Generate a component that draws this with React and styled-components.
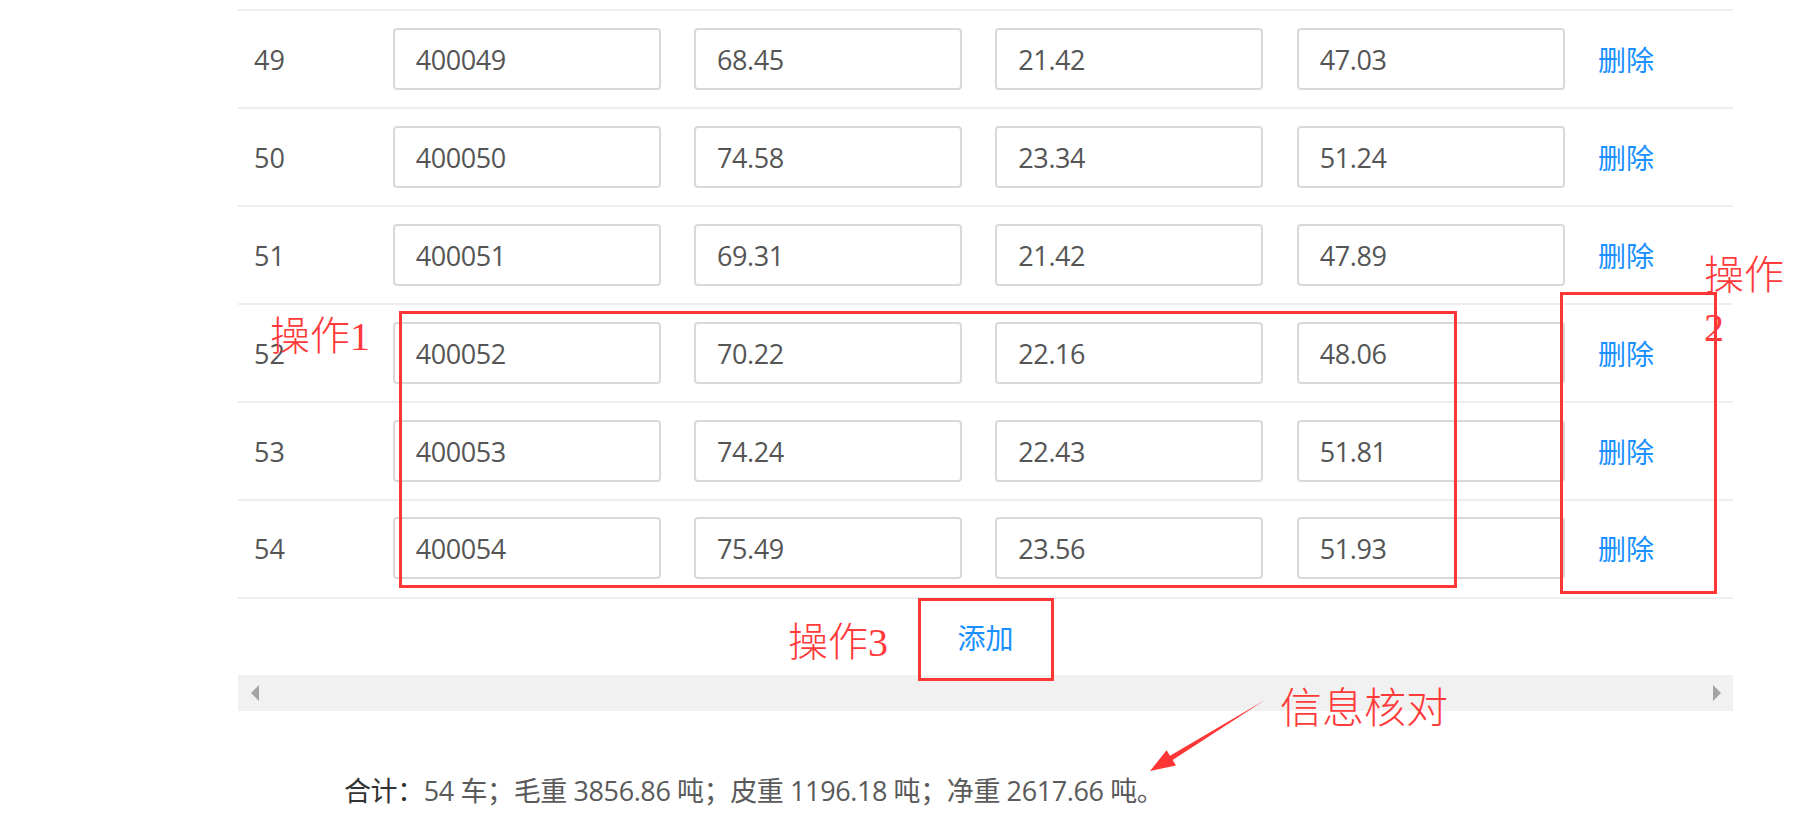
import React from "react";
import styled, { createGlobalStyle } from "styled-components";

const Global = createGlobalStyle`
  html, body { margin: 0; padding: 0; background: #fff; }
  body { font-family: "Open Sans", "Noto Sans CJK SC", sans-serif; }
  * { box-sizing: border-box; }
`;

const Page = styled.div`
  position: relative;
  width: 1810px;
  height: 820px;
  overflow: hidden;
  padding: 9px 0 0 238px;
`;

const Table = styled.div`
  width: 1495px;
`;

const Row = styled.div`
  display: grid;
  grid-template-columns: 138px repeat(4, 301.33px) 1fr;
  align-items: center;
  height: 98px;
  border-top: 2px solid #eeeeee;
  &:last-child { border-bottom: 2px solid #eeeeee; height: 100px; padding-bottom: 2px; }
`;

const Cell = styled.div`
  padding: 0 16.67px;
  ${(p) => p.$index && "padding-left: 16px;"}
  font-size: 27px;
  color: #555;
  line-height: 1;
`;

const Field = styled.input`
  display: block;
  width: 100%;
  height: 62px;
  border: 2px solid #d9d9d9;
  border-radius: 4px;
  padding: 0 21px;
  font-family: "Open Sans", "Noto Sans CJK SC", sans-serif;
  font-size: 27px;
  letter-spacing: -0.4px;
  color: #555;
  background: #fff;
  outline: none;
`;

const LinkText = styled.span`
  font-family: "Noto Sans CJK SC", sans-serif;
  font-size: 28px;
  color: #1890ff;
  cursor: pointer;
`;

const AddBar = styled.div`
  height: 76px;
  display: flex;
  align-items: center;
  justify-content: center;
`;

const ScrollBar = styled.div`
  height: 36px;
  background: #f1f1f1;
  display: flex;
  align-items: center;
  justify-content: space-between;
  padding: 0 12px 0 13px;
`;

const Arrow = styled.span`
  width: 0;
  height: 0;
  border-top: 8px solid transparent;
  border-bottom: 8px solid transparent;
  ${(p) => (p.$dir === "left" ? "border-right: 8px solid #a3a3a3;" : "border-left: 8px solid #a3a3a3;")}
`;

const Summary = styled.div`
  margin-top: 62px;
  padding-left: 106px;
  font-size: 27px;
  line-height: 36px;
  color: #5a5a5a;
  font-family: "Open Sans", "Noto Sans CJK SC", sans-serif;
  letter-spacing: -0.4px;
`;

const SummaryLabel = styled.span`
  color: #333;
  font-weight: 400;
`;

const Note = styled.div`
  position: absolute;
  left: ${(p) => p.$x}px;
  top: ${(p) => p.$y}px;
  width: ${(p) => (p.$w ? `${p.$w}px` : "auto")};
  font-family: "Liberation Serif", "Noto Sans CJK SC", serif;
  font-weight: 300;
  font-size: ${(p) => p.$size || 40}px;
  line-height: ${(p) => p.$lh || 1.1};
  color: #ff3a3a;
  white-space: ${(p) => (p.$w ? "normal" : "nowrap")};
  pointer-events: none;
`;

const Frame = styled.div`
  position: absolute;
  left: ${(p) => p.$x}px;
  top: ${(p) => p.$y}px;
  width: ${(p) => p.$w}px;
  height: ${(p) => p.$h}px;
  border: 3px solid #ff3636;
  pointer-events: none;
`;

const Overlay = styled.svg`
  position: absolute;
  left: 0;
  top: 0;
  pointer-events: none;
`;

const rows = [
  ["49", "400049", "68.45", "21.42", "47.03"],
  ["50", "400050", "74.58", "23.34", "51.24"],
  ["51", "400051", "69.31", "21.42", "47.89"],
  ["52", "400052", "70.22", "22.16", "48.06"],
  ["53", "400053", "74.24", "22.43", "51.81"],
  ["54", "400054", "75.49", "23.56", "51.93"],
];

export default function App() {
  return (
    <Page>
      <Global />
      <Table>
        {rows.map((r) => (
          <Row key={r[0]}>
            <Cell $index>{r[0]}</Cell>
            {r.slice(1).map((v, i) => (
              <Cell key={i}>
                <Field readOnly value={v} />
              </Cell>
            ))}
            <Cell>
              <LinkText>删除</LinkText>
            </Cell>
          </Row>
        ))}
      </Table>
      <Table>
        <AddBar>
          <LinkText>添加</LinkText>
        </AddBar>
        <ScrollBar>
          <Arrow $dir="left" />
          <Arrow $dir="right" />
        </ScrollBar>
      </Table>
      <Summary>
        <SummaryLabel>合计：</SummaryLabel>54 车；毛重 3856.86 吨；皮重 1196.18 吨；净重 2617.66 吨。
      </Summary>

      <Frame $x={399} $y={311} $w={1058} $h={277} />
      <Frame $x={1560} $y={292} $w={157} $h={302} />
      <Frame $x={918} $y={598} $w={136} $h={83} />

      <Note $x={270} $y={315}>操作1</Note>
      <Note $x={1704} $y={250} $w={90} $lh={1.3}>操作2</Note>
      <Note $x={788} $y={621}>操作3</Note>
      <Note $x={1280} $y={686} $size={42}>信息核对</Note>

      <Overlay width="1810" height="820" viewBox="0 0 1810 820">
        <polygon
          points="1265,700 1172.6,760 1176,765.5 1150,771 1166.6,750.2 1170,755.7"
          fill="#ff3636"
        />
      </Overlay>
    </Page>
  );
}
